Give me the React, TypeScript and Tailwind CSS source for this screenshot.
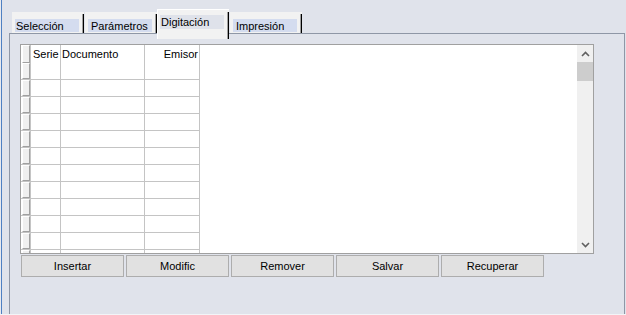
import React from "react";

function Tab({ label, active, ml, textPl }: { label: string; active?: boolean; ml: string; textPl: string }) {
  if (active) {
    return (
      <div className={`relative z-10 ${ml} mt-[9px] h-[30px] w-[72px] bg-[#f2f2f2] border-t border-l border-white flex`}>
        <div className="flex-1 pt-[5px] pl-[2px]">
          <div className={`h-[14px] w-[64px] bg-[#dfe2ea] leading-[13px] pt-px ${textPl}`}>{label}</div>
        </div>
        <div className="w-[2px] mt-[2px] flex">
          <div className="w-px bg-[#a0a0a0]" />
          <div className="w-px bg-black" />
        </div>
      </div>
    );
  }
  return (
    <div className={`${ml} mt-[12px] h-[21px] w-[72px] bg-[#f2f2f2] flex`}>
      <div className="flex-1 pt-[7px] pl-[3px]">
        <div className={`h-[13px] w-[64px] bg-[#d4dcef] leading-[13px] pt-px ${textPl}`}>{label}</div>
      </div>
      <div className="w-[2px] mt-[2px] flex">
        <div className="w-px bg-[#a0a0a0]" />
        <div className="w-px bg-black" />
      </div>
    </div>
  );
}

function Indicator() {
  return (
    <div className="w-[10px] border-r border-[#c4c4c4] pl-px">
      <div className="h-full w-[8px] bg-[#f0f0f0] border-l border-t border-white border-r border-b border-r-[#a0a0a0] border-b-[#a0a0a0]" />
    </div>
  );
}

function Row() {
  return (
    <div className="flex h-[17px] w-[179px] border-b border-[#c4c4c4]">
      <Indicator />
      <div className="w-[30px] border-r border-[#c4c4c4]" />
      <div className="w-[84px] border-r border-[#c4c4c4]" />
      <div className="w-[55px] border-r border-[#c4c4c4]" />
    </div>
  );
}

export default function App() {
  const rows = Array.from({ length: 12 });
  const buttons = ["Insertar", "Modific", "Remover", "Salvar", "Recuperar"];
  return (
    <div className="w-[626px] h-[315px] flex flex-col bg-[#e0e3eb] overflow-hidden font-['Liberation_Sans',Arial,sans-serif] text-[11px] text-black">
      <div className="flex h-[314px]">
        <div className="w-px bg-[#e8eaf0]" />
        <div className="w-px bg-[#4f80c2]" />
        <div className="flex-1 flex flex-col pl-[7px] pr-px">
          {/* tabs */}
          <div className="h-[33px] flex items-start">
            <Tab label="Selección" ml="ml-[3px]" textPl="pl-px" />
            <Tab label="Parámetros" ml="ml-px" textPl="pl-[3px]" />
            <Tab label="Digitación" active ml="ml-0" textPl="pl-px" />
            <Tab label="Impresión" ml="ml-px" textPl="pl-[3px]" />
          </div>
          {/* panel */}
          <div className="flex-1 border-l border-t border-r border-[#8f97a6] pl-[10px] pt-[10px]">
            <div className="w-[574px] h-[210px] border border-[#a0a0a0] bg-white flex">
              <div className="flex-1 h-full overflow-hidden">
                <div className="flex h-[18px] w-[179px]">
                  <Indicator />
                  <div className="w-[30px] border-r border-[#c4c4c4] pl-[2px] leading-[18px]">Serie</div>
                  <div className="w-[84px] border-r border-[#c4c4c4] pl-px leading-[18px]">Documento</div>
                  <div className="w-[55px] border-r border-[#c4c4c4] pr-px text-right leading-[18px]">Emisor</div>
                </div>
                {rows.map((_, i) => (
                  <Row key={i} />
                ))}
              </div>
              <div className="w-[16px] h-full bg-[#f0f0f0] flex flex-col">
                <div className="h-[17px] flex items-center justify-center">
                  <svg width="9" height="6" viewBox="0 0 9 6">
                    <path d="M1 5 L4.5 1.5 L8 5" fill="none" stroke="#606060" strokeWidth="1.6" />
                  </svg>
                </div>
                <div className="h-[19px] bg-[#cdcdcd]" />
                <div className="flex-1" />
                <div className="h-[17px] flex items-center justify-center">
                  <svg width="9" height="6" viewBox="0 0 9 6">
                    <path d="M1 1 L4.5 4.5 L8 1" fill="none" stroke="#606060" strokeWidth="1.6" />
                  </svg>
                </div>
              </div>
            </div>
            <div className="mt-px pl-px flex gap-[2px]">
              {buttons.map((b) => (
                <div key={b} className="w-[103px] h-[22px] border border-[#adadad] bg-[#e1e1e1] flex items-center justify-center">
                  {b}
                </div>
              ))}
            </div>
          </div>
        </div>
      </div>
      <div className="h-px bg-[#f3f4f7]" />
    </div>
  );
}
